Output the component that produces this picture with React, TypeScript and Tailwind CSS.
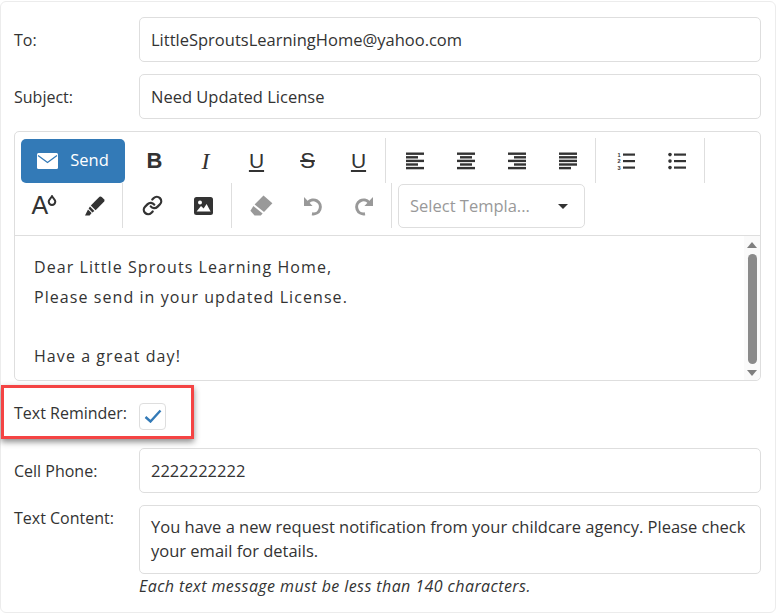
import { Link } from "lucide-react";

// ─── Toolbar drawings ─────────────────────────────────────────────────────────

function AlignIcon({ xs }: { xs: [number, number][] }) {
  return (
    <svg width="18" height="18" viewBox="0 0 18 18" fill="#333">
      {xs.map(([x, w], i) => (
        <rect key={i} x={x} y={0.5 + i * 3.6} width={w} height="2.4" />
      ))}
    </svg>
  );
}

function OrderedList() {
  return (
    <svg width="18" height="20" viewBox="0 0 18 20" fill="#333">
      {[0, 1, 2].map((i) => (
        <g key={i}>
          <text x="0.5" y={5.6 + i * 6.5} fontSize="5.6" fontWeight="700" fontFamily="Liberation Sans, sans-serif">{i + 1}</text>
          <rect x="6" y={2.5 + i * 6.5} width="12" height="2.2" />
        </g>
      ))}
    </svg>
  );
}

function BulletList() {
  return (
    <svg width="18" height="20" viewBox="0 0 18 20" fill="#333">
      {[0, 1, 2].map((i) => (
        <g key={i}>
          <circle cx="2" cy={3.6 + i * 6.5} r="1.8" />
          <rect x="6" y={2.5 + i * 6.5} width="12" height="2.2" />
        </g>
      ))}
    </svg>
  );
}

function MailIcon() {
  return (
    <svg width="21" height="16" viewBox="0 0 21 16">
      <rect width="21" height="16" rx="1.5" fill="#fff" />
      <path d="M1 2.5 10.5 9.5 20 2.5" fill="none" stroke="#337ab7" strokeWidth="1.3" />
    </svg>
  );
}

function FontColor() {
  return (
    <span className="relative w-[24px] h-[24px] flex items-center font-['Liberation_Sans',sans-serif]">
      <span className="text-[25px] leading-none">A</span>
      <svg width="10" height="11" viewBox="0 0 10 11" className="absolute right-[-1px] top-[1px]">
        <path d="M5 1.2 C6 3 8.3 4.5 8.3 6.6 A3.3 3.3 0 0 1 1.7 6.6 C1.7 4.5 4 3 5 1.2Z" fill="#fff" stroke="#333" strokeWidth="2" />
      </svg>
    </span>
  );
}

function Marker() {
  return (
    <svg width="20" height="20" viewBox="0 0 20 20" fill="#333">
      <path d="M14.5 0.8 Q15.6 0 16.7 0.9 L19 3.2 Q20 4.3 19.2 5.4 L10.6 14.2 L5.8 9.4Z" />
      <path d="M5 10.6 L9.4 15 L7.4 16.4 L3.6 12.6Z" />
      <path d="M3 13.4 L6.6 17 L4.6 19.6 L0 19.6Z" />
    </svg>
  );
}

function Picture() {
  return (
    <svg width="19" height="18" viewBox="0 0 19 18">
      <rect width="19" height="18" rx="2.5" fill="#333" />
      <circle cx="6" cy="5.6" r="2" fill="#fff" />
      <path d="M2.6 14.6 L7 9 L9.6 11.6 L12.6 7 L16.6 14.6Z" fill="#fff" />
    </svg>
  );
}

function Eraser() {
  return (
    <svg width="23" height="21" viewBox="0 0 23 21" fill="#999">
      <path d="M13.5 0.6 L22.4 8.2 L14 17 L4.6 9.6Z" />
      <path d="M3.4 11 L12.6 18.6 L10.8 20.6 L4.6 20.6 L0.4 15.8 Z" />
    </svg>
  );
}

function Undo({ flip }: { flip?: boolean }) {
  return (
    <svg width="20" height="20" viewBox="0 0 20 20" className={flip ? "-scale-x-100" : ""}>
      <path d="M5 6.4 A7 7 0 1 1 9 17.8" fill="none" stroke="#999" strokeWidth="3" />
      <path d="M1 1 L1 10 L9.6 10Z" fill="#999" />
    </svg>
  );
}

function Btn({ children }: { children: React.ReactNode }) {
  return <div className="w-[51px] h-full flex items-center justify-center text-[#333] shrink-0">{children}</div>;
}

function Letter({ children, className }: { children: React.ReactNode; className: string }) {
  return <span className={`leading-none text-[#333] ${className}`}>{children}</span>;
}

function Sep({ className }: { className: string }) {
  return <div className={`w-px h-full bg-[#dedede] shrink-0 ${className}`} />;
}

// ─── Form rows ────────────────────────────────────────────────────────────────

function Field({ label, value, className }: { label: string; value: string; className: string }) {
  return (
    <div className={`flex items-center ${className}`}>
      <label className="w-[125px] shrink-0">{label}</label>
      <div className="flex-1 h-[45px] border border-[#dedede] rounded-[5px] px-[11px] pt-px flex items-center text-[16.5px]">{value}</div>
    </div>
  );
}

export default function App() {
  return (
    <div className="w-[779px] h-[615px] bg-white text-[#333] text-[16px] font-['Open_Sans','Noto_Sans',sans-serif]">
      <div className="relative w-[776px] h-[612px] mt-px border border-[#ececec] rounded-[6px] pl-[13px] pr-[14px] pt-[15px]">
        <Field label="To:" value="LittleSproutsLearningHome@yahoo.com" className="" />
        <Field label="Subject:" value="Need Updated License" className="mt-[12px]" />

        {/* Editor */}
        <div className="mt-[12px] h-[250px] border border-[#dedede] rounded-[5px] flex flex-col">
          <div className="h-[104px] border-b border-[#dedede] pt-[6px] flex flex-col">
            <div className="h-[45px] flex items-center pl-[6px]">
              <div className="w-[104px] h-[44px] mr-[4px] bg-[#337ab7] rounded-[5px] flex items-center justify-center gap-[12px] text-white text-[16.5px] shrink-0">
                <MailIcon />
                <span>Send</span>
              </div>
              <Btn><Letter className="font-['Liberation_Sans',sans-serif] font-bold text-[22px]">B</Letter></Btn>
              <Btn><Letter className="font-['Liberation_Serif',serif] italic text-[24px]">I</Letter></Btn>
              <Btn><Letter className="font-['Liberation_Sans',sans-serif] text-[21px] underline underline-offset-[2px] decoration-[1.5px]">U</Letter></Btn>
              <Btn><Letter className="font-['Liberation_Sans',sans-serif] text-[22px] line-through decoration-[1.5px]">S</Letter></Btn>
              <Btn><Letter className="font-['Liberation_Sans',sans-serif] text-[21px] underline underline-offset-[2px] decoration-[1.5px]">U</Letter></Btn>
              <Sep className="ml-[1px] mr-[3px]" />
              <Btn><AlignIcon xs={[[0, 18], [0, 12], [0, 18], [0, 12], [0, 18]]} /></Btn>
              <Btn><AlignIcon xs={[[0, 18], [3, 12], [0, 18], [3, 12], [0, 18]]} /></Btn>
              <Btn><AlignIcon xs={[[0, 18], [6, 12], [0, 18], [6, 12], [0, 18]]} /></Btn>
              <Btn><AlignIcon xs={[[0, 18], [0, 18], [0, 18], [0, 18], [0, 12]]} /></Btn>
              <Sep className="ml-[2px] mr-[4px]" />
              <Btn><OrderedList /></Btn>
              <Btn><BulletList /></Btn>
              <Sep className="ml-[2px]" />
            </div>
            <div className="h-[45px] flex items-center pl-[3px]">
              <Btn><FontColor /></Btn>
              <Btn><Marker /></Btn>
              <Sep className="ml-[2px] mr-[4px]" />
              <Btn><Link size={21} strokeWidth={2.6} /></Btn>
              <Btn><Picture /></Btn>
              <Sep className="ml-[2px] mr-[4px]" />
              <Btn><Eraser /></Btn>
              <Btn><Undo /></Btn>
              <Btn><Undo flip /></Btn>
              <Sep className="ml-[2px]" />
              <div className="ml-[6px] w-[187px] h-[44px] border border-[#dedede] rounded-[5px] pt-px flex items-center pl-[11px] pr-[16px] justify-between text-[#999] text-[16.5px]">
                <span>Select Templa...</span>
                <span className="w-0 h-0 border-x-[5px] border-x-transparent border-t-[5px] border-t-[#333]" />
              </div>
            </div>
          </div>

          <div className="flex-1 flex min-h-0">
            <div className="flex-1 pl-[19px] pt-[17px] leading-[29.6px] tracking-[1.07px]">
              <div>Dear Little Sprouts Learning Home,</div>
              <div>Please send in your updated License.</div>
              <div className="h-[30px]" />
              <div>Have a great day!</div>
            </div>
            <div className="w-[16px] bg-[#fafafa] flex flex-col items-center pt-[6px] pb-[4px] rounded-br-[5px]">
              <span className="w-0 h-0 border-x-[5px] border-x-transparent border-b-[6px] border-b-[#7f7f7f]" />
              <div className="w-[9px] flex-1 my-[6px] bg-[#8a8a8a] rounded-full" />
              <span className="w-0 h-0 border-x-[5px] border-x-transparent border-t-[6px] border-t-[#7f7f7f]" />
            </div>
          </div>
        </div>

        {/* Text reminder */}
        <div className="flex items-center mt-[17px] h-[30px]">
          <label className="w-[125px] shrink-0">Text Reminder:</label>
          <div className="w-[27px] h-[27px] mt-[6px] border border-[#dedede] rounded-[4px] flex items-center justify-center">
            <svg width="18" height="14" viewBox="0 0 18 14" fill="none">
              <path d="M1.5 8 6.5 12.5 16.5 1.5" stroke="#337ab7" strokeWidth="2.4" />
            </svg>
          </div>
        </div>

        <Field label="Cell Phone:" value="2222222222" className="mt-[20px]" />

        {/* Text content */}
        <div className="flex mt-[12px]">
          <label className="w-[125px] shrink-0 pt-[1px]">Text Content:</label>
          <div className="flex-1 h-[69px] border border-[#dedede] rounded-[5px] pl-[11px] pr-[8px] pt-[9px] leading-[24px] text-[16.5px]">
            You have a new request notification from your childcare agency. Please check your email for details.
          </div>
        </div>
        <div className="ml-[125px] mt-[0px] italic tracking-[0.42px]">Each text message must be less than 140 characters.</div>

        {/* Callout drawn over the screenshot */}
        <div className="absolute left-0 top-[383px] w-[193px] h-[54px] border-[3px] border-[#f44444] shadow-[0_3px_6px_rgba(0,0,0,0.45)]" />
      </div>
    </div>
  );
}
